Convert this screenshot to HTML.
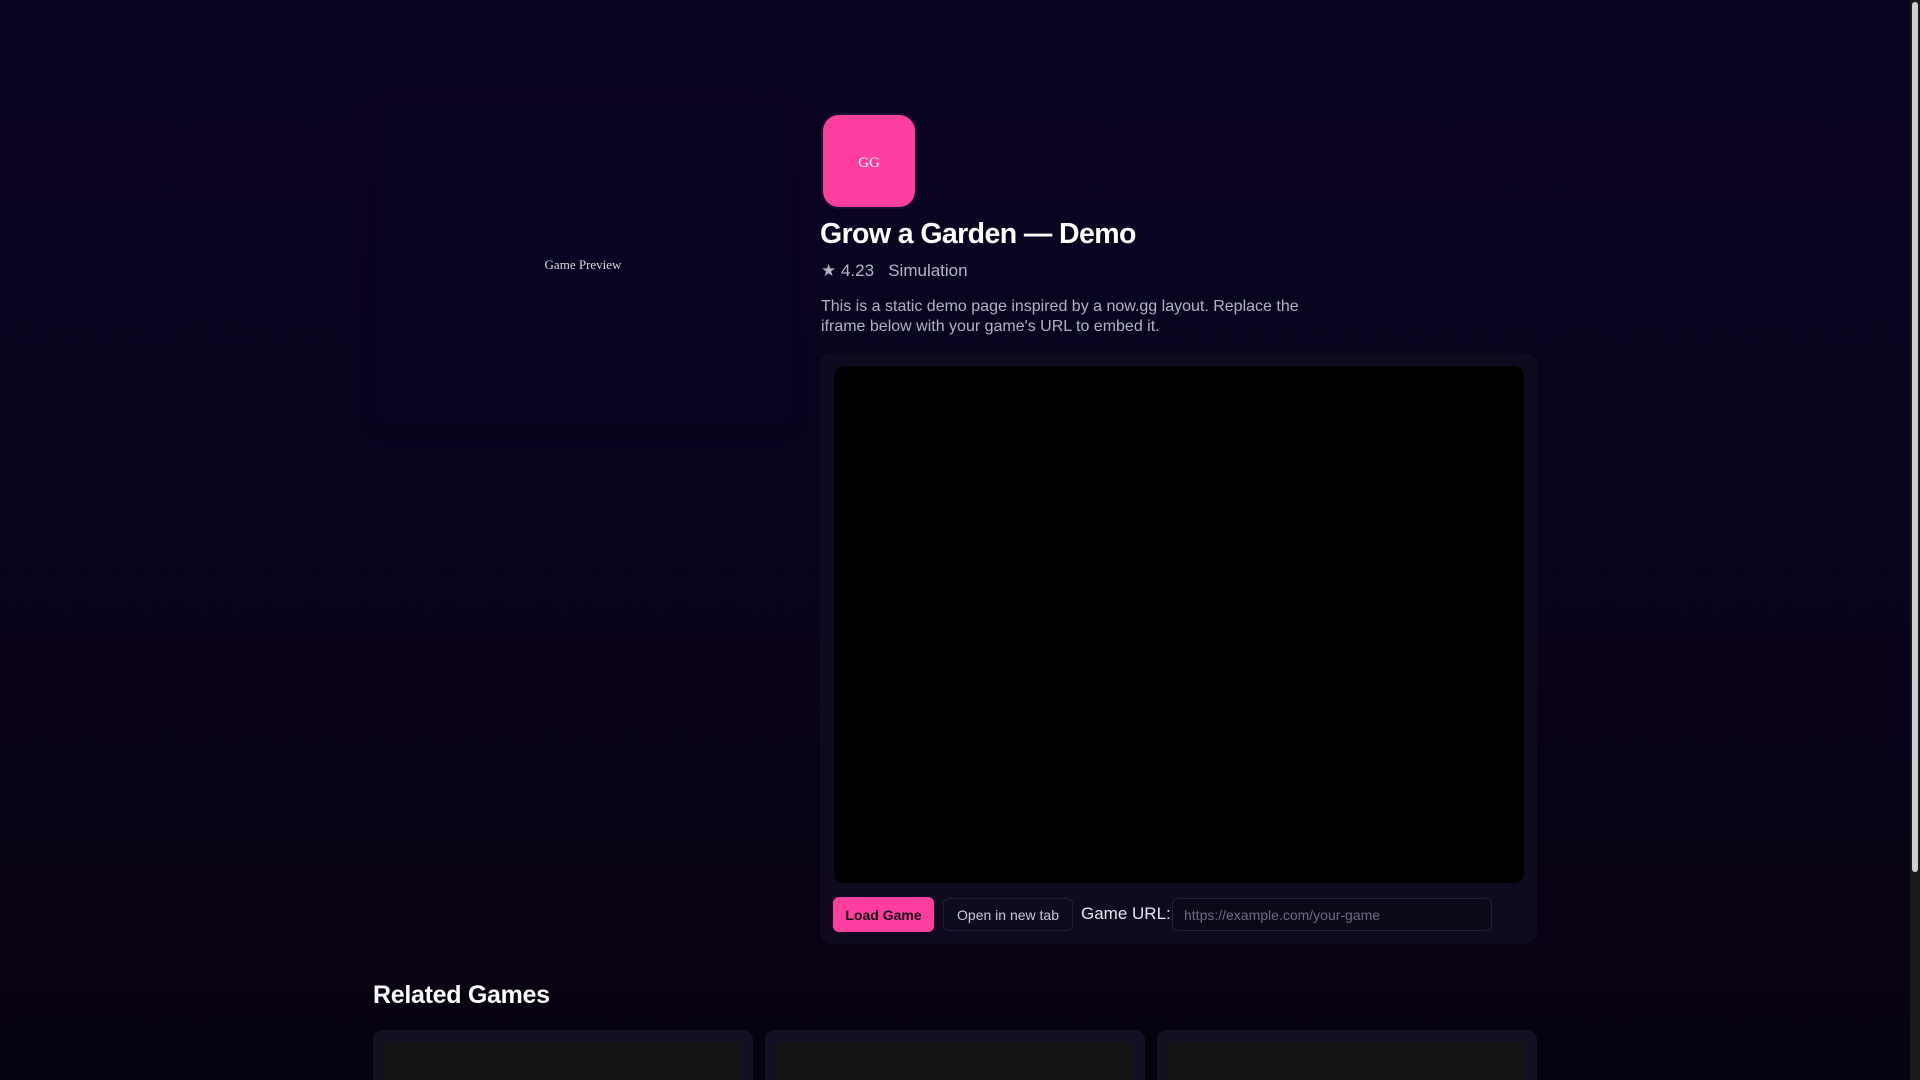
<!DOCTYPE html>
<html><head><meta charset="utf-8"><style>
*{box-sizing:border-box;margin:0;padding:0}
html,body{width:1920px;height:1080px;overflow:hidden}
body{background:linear-gradient(180deg,#0b0322 0%,#0a0320 40%,#07020f 100%);font-family:"Liberation Sans",sans-serif;color:#fff;position:relative}
.sb{position:absolute;right:0;top:0;width:10px;height:1080px;background:#1a1a1a}
.sb i{position:absolute;left:2px;top:2px;width:6px;height:870px;background:#cfcfcf;border-radius:3px}
.prev{position:absolute;left:373px;top:103px;width:420px;height:322px;background:#0a0222;border-radius:14px;box-shadow:0 4px 14px rgba(0,0,0,.2);display:flex;align-items:center;justify-content:center;font-family:"Liberation Serif",serif;font-size:13px;color:#ddd;padding-top:1px}
.tile{position:absolute;left:823px;top:115px;width:92px;height:92px;background:#ff3fa0;border-radius:16px;box-shadow:0 0 0 2px #1a1030;display:flex;align-items:center;justify-content:center;font-family:"Liberation Serif",serif;font-size:15px;color:#fff;padding-top:4px}
h1{position:absolute;left:820px;top:218px;font-size:28.5px;font-weight:bold;letter-spacing:-.6px}
.meta{position:absolute;left:821px;top:261px;font-size:17px;color:#b8b4c6}
.desc{position:absolute;left:821px;top:297px;width:480px;font-size:16px;line-height:20px;color:#b5b1c3}
.player{position:absolute;left:820px;top:353px;width:717px;height:591px;background:#0f0a1f;border-radius:12px}
.frame{position:absolute;left:14px;top:13px;width:690px;height:517px;background:#000;border-radius:10px}
.btn1{position:absolute;left:13px;top:544px;width:101px;height:35px;background:#ff3fa0;border-radius:6px;color:#1a0515;font-weight:bold;font-size:14px;display:flex;align-items:center;justify-content:center}
.btn2{position:absolute;left:123px;top:545px;width:130px;height:33px;border:1px solid #251d38;border-radius:6px;color:#ccc8d8;font-size:14px;display:flex;align-items:center;justify-content:center}
.lbl{position:absolute;left:261px;top:551px;font-size:17px;color:#e8e6f0}
.inp{position:absolute;left:352px;top:545px;width:320px;height:33px;border:1px solid #251d38;border-radius:6px;background:#0c0719;color:#6f6a80;font-size:14px;padding:8px 11px}
h2{position:absolute;left:373px;top:981px;font-size:25px;font-weight:bold;letter-spacing:-.3px}
.card{position:absolute;top:1030px;width:380px;height:80px;background:#150f23;border-radius:10px}
.card i{position:absolute;left:12px;top:12px;right:12px;bottom:0;background:#141414;border-radius:6px}
</style></head><body>
<div class="prev">Game Preview</div>
<div class="tile">GG</div>
<h1>Grow a Garden — Demo</h1>
<div class="meta">★ 4.23&nbsp;&nbsp;&nbsp;Simulation</div>
<div class="desc">This is a static demo page inspired by a now.gg layout. Replace the iframe below with your game's URL to embed it.</div>
<div class="player"><div class="frame"></div>
<div class="btn1">Load Game</div>
<div class="btn2">Open in new tab</div>
<div class="lbl">Game URL:</div>
<div class="inp">https://example.com/your-game</div>
</div>
<h2>Related Games</h2>
<div class="card" style="left:373px"><i></i></div>
<div class="card" style="left:765px"><i></i></div>
<div class="card" style="left:1157px"><i></i></div>
<div class="sb"><i></i></div>
</body></html>
